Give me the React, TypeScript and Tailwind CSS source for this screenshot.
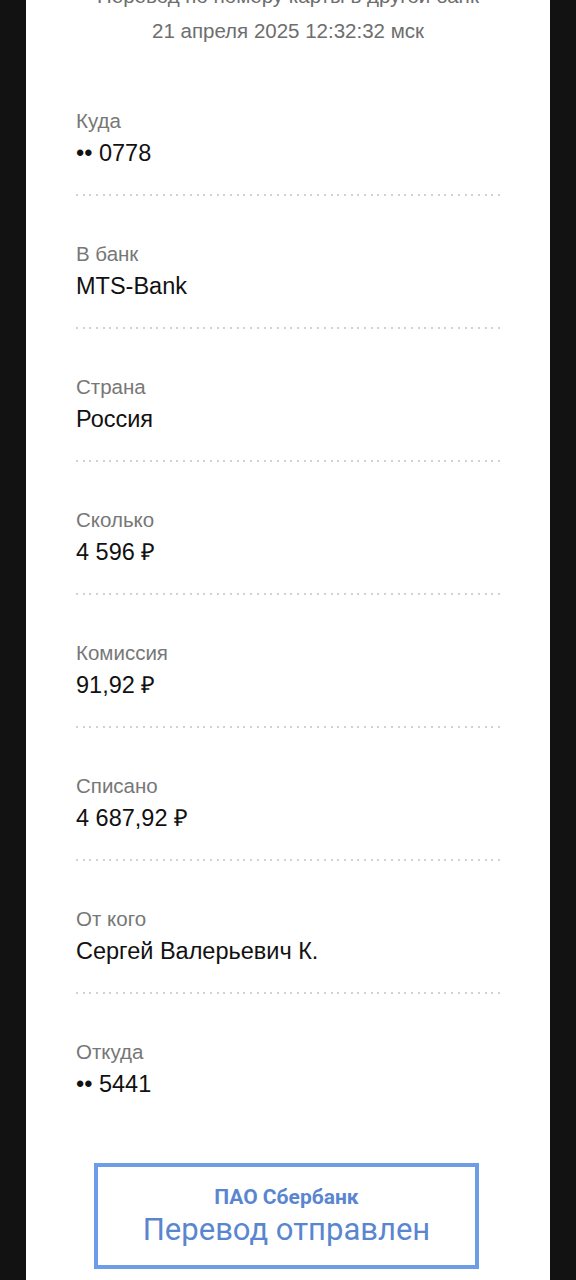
import React from 'react';

interface Row {
  label: string;
  value: string;
}

const rows: Row[] = [
  { label: 'Куда', value: '•• 0778' },
  { label: 'В банк', value: 'MTS-Bank' },
  { label: 'Страна', value: 'Россия' },
  { label: 'Сколько', value: '4 596 ₽' },
  { label: 'Комиссия', value: '91,92 ₽' },
  { label: 'Списано', value: '4 687,92 ₽' },
  { label: 'От кого', value: 'Сергей Валерьевич К.' },
  { label: 'Откуда', value: '•• 5441' },
];

const Dots: React.FC = () => (
  <div className="h-[2px] w-[424px] bg-[repeating-linear-gradient(to_right,#d2d2d2_0_2px,transparent_2px_6.7px)]" />
);

const App: React.FC = () => {
  return (
    <div className="h-[1280px] overflow-hidden bg-[#121212] [font-family:'Liberation_Sans',Arial,sans-serif]">
      <div className="mx-[26px] flex h-full flex-col bg-white">
        {/* header, top line is cut off by the screen edge */}
        <div className="-mt-[16px] flex flex-col items-center text-[20.5px] text-[#6e6e6e]">
          <p className="leading-[24px]">Перевод по номеру карты в другой банк</p>
          <p className="mt-[11px] leading-[24px]">21 апреля 2025 12:32:32 мск</p>
        </div>

        <div className="mt-[66px] pl-[50px]">
          {rows.map((row, i) => (
            <div key={row.label} className={i < rows.length - 1 ? 'pb-[46px]' : ''}>
              <p className="text-[20.5px] leading-[24px] text-[#777777]">{row.label}</p>
              <p className="mt-[7px] text-[23.5px] leading-[26px] text-[#111111]">{row.value}</p>
              {i < rows.length - 1 && (
                <div className="mt-[28px]">
                  <Dots />
                </div>
              )}
            </div>
          ))}
        </div>

        <div className="ml-[68px] mt-[66px] flex h-[106px] w-[385px] flex-col items-center justify-center border-[4px] border-[#6d9ce8] [font-family:'Roboto',sans-serif] text-[#5a86cf]">
          <p className="text-[21px] font-bold leading-[24px]">ПАО Сбербанк</p>
          <p className="mt-[3px] text-[31px] leading-[36px]">Перевод отправлен</p>
        </div>
      </div>
    </div>
  );
};

export default App;
